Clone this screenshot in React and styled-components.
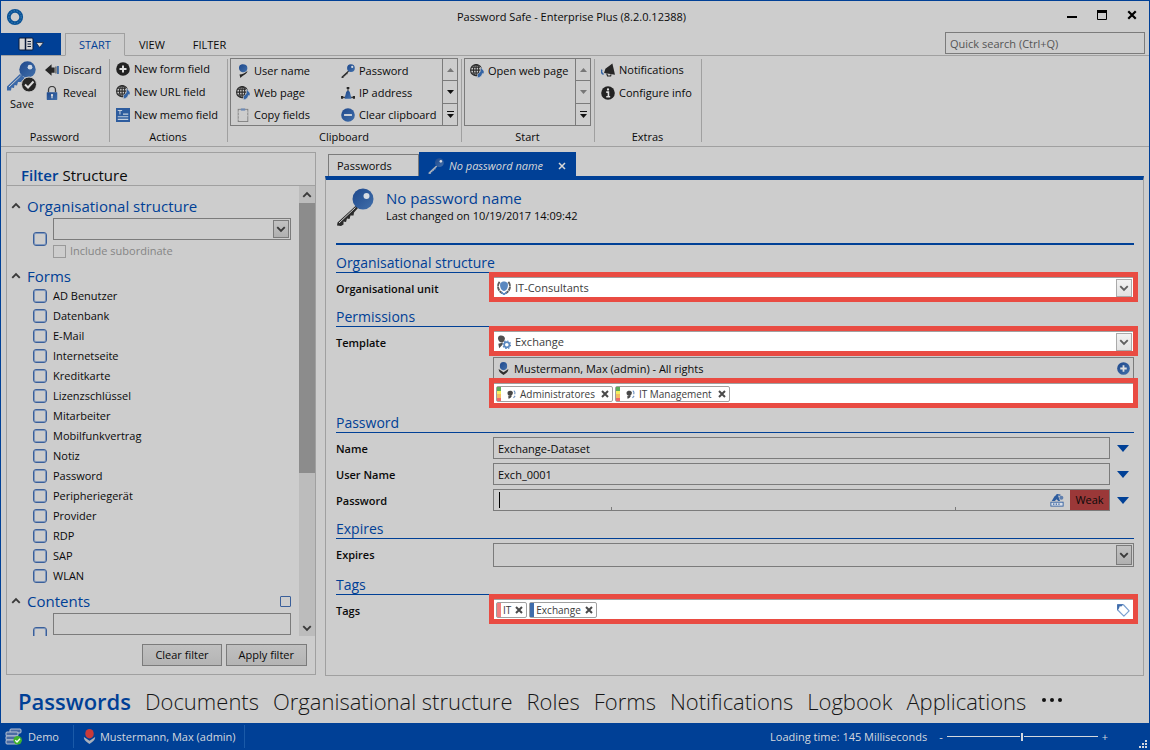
import React from 'react'
import styled, { createGlobalStyle, css } from 'styled-components'

const blue = '#004096'
const grey = '#cdcdcd'
const line = '#a0a0a0'
const edge = '#7b7b7b'
const red = '#e94b42'

const GlobalStyle = createGlobalStyle`
  * {
    box-sizing: border-box;
  }
  body {
    margin: 0;
    background: ${grey};
    font-family: 'Open Sans', 'Noto Sans', sans-serif;
    font-size: 11px;
    line-height: 16px;
    color: #0a0a0a;
  }
  button, input, select {
    font: inherit;
    color: inherit;
    margin: 0;
    padding: 0;
    border: 0;
    border-radius: 0;
    background: none;
    outline: none;
  }
  svg {
    display: block;
    flex: none;
  }
`

/**
 * ICONS
 */

const Svg = ({ size = 16, box = 16, children }) => (
  <svg width={size} height={size} viewBox={`0 0 ${box} ${box}`} aria-hidden="true">
    {children}
  </svg>
)

const HiddenSvg = styled.svg`
  position: absolute;
`

const Gradients = () => (
  <HiddenSvg width="0" height="0" aria-hidden="true">
    <defs>
      <linearGradient id="blueFill" x1="0" y1="0" x2="1" y2="1">
        <stop offset="0" stopColor="#1d478b" />
        <stop offset="1" stopColor="#4270ab" />
      </linearGradient>
    </defs>
  </HiddenSvg>
)

const KeyIcon = ({ size, shaft = '#2b2b2b' }) => (
  <Svg size={size} box={38}>
    <path d="M20 17.500 1.500 34.500 1 37.500 5 38 7.500 36.500 7.500 33.500 10 34 11 30.500 13.500 31 14.500 27.500 17.500 27.500 18 24.500 22 20z" fill={shaft} />
    {size > 20 && <path d="M19.500 19.500 3 35" stroke={grey} strokeWidth="1" />}
    <circle cx="27" cy="11" r="10.500" fill="url(#blueFill)" />
    <circle cx="30.500" cy="8" r="3" fill="#d8dde4" />
  </Svg>
)

const SaveIcon = () => (
  <svg width="32" height="32" viewBox="0 0 32 32" aria-hidden="true">
    <path d="M14 13 1 25.500 1 29.500 5 29.500 5.500 26.500 8 27 8.500 24 11 24.500 12 21 15 21 19 17z" fill="#3a68a8" />
    <path d="M14.500 15 3 26" stroke={grey} strokeWidth="1" />
    <circle cx="21.500" cy="8.500" r="8.200" fill="url(#blueFill)" />
    <circle cx="24" cy="6.200" r="2.400" fill="#cdd7e4" />
    <circle cx="23" cy="23.500" r="7.500" fill="#262626" stroke={grey} />
    <path d="M19 23.500 22 26.500 27.500 20.500" fill="none" stroke="#dcdcdc" strokeWidth="2" />
  </svg>
)

const DiscardIcon = () => (
  <Svg size={14}>
    <path d="M0 8 7.500 1.500V5H11V11H7.500V14.500z" fill="#262626" />
    <path d="M12.500 4V12" stroke="#262626" strokeWidth="1" />
    <path d="M14.800 3.500V12.500" stroke="#3464a4" strokeWidth="2" />
  </Svg>
)

const LockIcon = () => (
  <Svg size={14}>
    <path d="M4 7V4.500A4 4 0 0 1 12 4.500V7" fill="none" stroke="#404040" strokeWidth="1.500" />
    <rect x="2" y="7" width="12" height="9" rx="0.500" fill="url(#blueFill)" />
    <circle cx="8" cy="10.300" r="1.300" fill="#e0e0e0" />
    <path d="M8 10V14" stroke="#e0e0e0" strokeWidth="1.400" />
  </Svg>
)

const PlusIcon = ({ size = 14, fill = '#222' }) => (
  <Svg size={size}>
    <circle cx="8" cy="8" r="7.800" fill={fill} />
    <path d="M8 4V12M4 8H12" stroke="#e0e0e0" strokeWidth="2.200" />
  </Svg>
)

const MinusIcon = () => (
  <Svg size={14}>
    <circle cx="8" cy="8" r="7.800" fill="url(#blueFill)" />
    <path d="M3.500 8H12.500" stroke="#e0e0e0" strokeWidth="2" />
  </Svg>
)

const GlobeIcon = () => (
  <Svg size={14}>
    <g fill="none" stroke="#2b2b2b" strokeWidth="1.300">
      <circle cx="7" cy="7" r="6.300" />
      <ellipse cx="7" cy="7" rx="3" ry="6.300" />
      <path d="M7 0.500V13.500M0.700 7H13M1.800 3.700H12.200M1.800 10.300H12.200" />
    </g>
    <path d="M16 8 12 3.500V6.500C12 9 10.500 10.500 8.500 11.500V16C12.500 15 14 13 14 11H16z" fill="#3464a4" stroke={grey} strokeWidth="0.700" />
  </Svg>
)

const MemoIcon = () => (
  <Svg size={14}>
    <rect width="16" height="16" fill="#2d5c9e" />
    <path d="M2 2.800H7M4.500 3V7.500M8 7H14M2 10H14M2 13H14" stroke="#c4cfde" strokeWidth="1.200" />
  </Svg>
)

const PersonIcon = ({ size = 14 }) => (
  <Svg size={size}>
    <path d="M4 2C5.500 -0.500 13 -0.500 13 4.500 13 8 10.500 9.500 7.500 9.500 4 9 2.500 5 4 2z" fill="url(#blueFill)" />
    <path d="M4 12C7 12 11 10 13 8 13 11 9 12 5 16z" fill="#262626" />
  </Svg>
)

const NetworkIcon = () => (
  <Svg size={14}>
    <path d="M8 3V8M2 13H14" stroke="#404040" strokeWidth="1.300" />
    <path d="M8 5 10 6.500 12 14.500H4L6 6.500z" fill="url(#blueFill)" />
    <path d="M6.500 1H9.500V3.500H6.500zM0 11.500H2.500V14.500H0zM13.500 11.500H16V14.500H13.500z" fill="#262626" />
  </Svg>
)

const ClipboardIcon = () => (
  <Svg size={14}>
    <rect x="2.500" y="1.500" width="11" height="14" fill="none" stroke="#7d7d7d" />
    <path d="M5.500 0.500H10.500V3H5.500z" fill="#6f8bb5" />
    <path d="M2.500 4V5.500M2.500 8V9.500M2.500 12V13.500M13.500 4V5.500M13.500 8V9.500" stroke={grey} />
  </Svg>
)

const HornIcon = () => (
  <Svg size={14}>
    <path d="M13 0.500 5 6.500 3.500 11.500 16 13.500z" fill="#262626" />
    <path d="M6.500 12 7.500 14.800 11 14.800 11.500 13" fill="none" stroke="#262626" strokeWidth="1.300" />
    <path d="M1 7.500C0 9.500 0.500 12 3 13" fill="none" stroke="#3464a4" strokeWidth="1.800" />
  </Svg>
)

const InfoIcon = () => (
  <Svg size={14}>
    <circle cx="8" cy="8" r="7.800" fill="#222" />
    <path d="M6 7H8.500V12M6 12.300H10.500" fill="none" stroke="#e0e0e0" strokeWidth="1.800" />
    <circle cx="8" cy="4" r="1.300" fill="#e0e0e0" />
  </Svg>
)

const RingIcon = () => (
  <Svg size={18} box={18}>
    <circle cx="9" cy="9" r="6.200" fill="none" stroke="#0a5296" strokeWidth="3.800" />
    <circle cx="9" cy="9" r="6.200" fill="none" stroke="#4186ba" strokeWidth="1" strokeDasharray="1.500 1.500" />
  </Svg>
)

const MenuIcon = () => (
  <svg width="26" height="14" viewBox="0 0 26 14" aria-hidden="true">
    <rect x="1" y="1" width="14" height="12" rx="1" fill="#d6d6d6" stroke="#0a1a38" />
    <path d="M7.500 1V13" stroke="#0a1a38" strokeWidth="1.500" />
    <path d="M9.500 4.500H13M9.500 7H13M9.500 9.500H13" stroke="#0a1a38" />
    <path d="M18 5.500H25.500L21.700 10.500z" fill="#d6d6d6" stroke="#0a1a38" strokeWidth="0.700" />
  </svg>
)

const ShieldIcon = () => (
  <Svg size={14}>
    <path d="M4 2.500C5.500 0 10.500 0 12 2.500 13.500 5.500 11.500 11 8 11.500 4.500 11 2.500 5.500 4 2.500z" fill="#5a88c0" />
    <path d="M3 1C-0.500 5 1 11 6 14M13 1C16.500 5 15 11 10 14" fill="none" stroke="#5c5c5c" strokeWidth="2.200" strokeDasharray="5 0.700" />
    <path d="M5 12.500 8 15.500 11 12.500" fill="none" stroke="#5a88c0" strokeWidth="1.800" />
  </Svg>
)

const TemplateIcon = () => (
  <Svg size={14}>
    <path d="M1.500 2C3 -0.500 9 0 9 4 9 7 7 8.500 5 8.500 2 8.500 0.500 4.500 1.500 2z" fill="#505050" />
    <path d="M1.500 10 7 8.500 6 11.500 2.500 15z" fill="#505050" />
    <circle cx="11.200" cy="11.200" r="3" fill="none" stroke="#5a88c0" strokeWidth="1.900" />
    <circle cx="11.200" cy="11.200" r="4.400" fill="none" stroke="#5a88c0" strokeWidth="1.300" strokeDasharray="1.800 1.600" />
  </Svg>
)

const UserIcon = ({ head = 'url(#blueFill)', body = '#2f2f2f', size = 14 }) => (
  <Svg size={size}>
    <ellipse cx="8" cy="5" rx="4.500" ry="5" fill={head} />
    <path d="M2 8.500 8 12.500 14 8.500C14 12 11 14 8 16 5 14 2 12 2 8.500z" fill={body} />
  </Svg>
)

const GroupIcon = () => (
  <Svg size={9}>
    <path d="M1 4.500C1.500 0 10 0 10.500 4.500 10.500 8.500 8 10.500 5.500 10.500 2 10 0.500 7.500 1 4.500z" fill="#484848" />
    <path d="M2 11 9 10 7 13 3 16z" fill="#484848" />
    <path d="M12 1.500C14.500 2.500 14.500 5.500 13.500 7.500M11.500 14 14.500 10.500" fill="none" stroke="#6f93c2" strokeWidth="2" />
  </Svg>
)

const DiceIcon = () => (
  <Svg size={14}>
    <rect x="1" y="10.500" width="14" height="4.500" fill="#d9dfe8" stroke="#2d5c9e" />
    <path d="M3.500 12.700H12.500" stroke="#2d5c9e" strokeWidth="1.500" strokeDasharray="1.500 1.500" />
    <path d="M2 9 5 4 8.500 1 11.500 9H9.500L7.500 7 5.500 9z" fill="#2d5c9e" />
    <path d="M7.500 2 12 2.500" stroke="#2d5c9e" strokeWidth="1.500" />
    <circle cx="13" cy="5.500" r="2.300" fill="#5f7fae" />
  </Svg>
)

const TagIcon = () => (
  <Svg size={14}>
    <path d="M2 2H8.500L15 9 9 15 2 8z" fill="none" stroke="#7ba0d0" strokeWidth="1.400" strokeLinejoin="round" />
    <path d="M1.300 1.300H8.500L6 4 4 5.500 1.300 8.500z" fill="#3f6cab" />
    <circle cx="4.800" cy="4.800" r="1" fill="#fff" />
  </Svg>
)

const CrossIcon = ({ size = 8, color = '#4a4a4a', weight = 4 }) => (
  <Svg size={size}>
    <path d="M2 2 14 14M14 2 2 14" stroke={color} strokeWidth={weight} />
  </Svg>
)

const Chevron = ({ up, color = '#3a3a3a' }) => (
  <Svg size={10}>
    <path d={up ? 'M2 11 8 5 14 11' : 'M2 5 8 11 14 5'} fill="none" stroke={color} strokeWidth="3" />
  </Svg>
)

const ServerIcon = () => (
  <Svg size={17} box={17}>
    <g fill="#4a6ba3" stroke="#c6ccd6" strokeWidth="0.900">
      <rect x="5" y="1" width="11" height="4" rx="1" />
      <rect x="1" y="4" width="12" height="4" rx="1" />
      <rect x="1" y="8" width="12" height="4" rx="1" />
      <rect x="1" y="12" width="12" height="4" rx="1" />
    </g>
    <circle cx="12.700" cy="12.300" r="4.200" fill="#3fb42c" />
    <path d="M10.300 12.300 12 14 15 10.700" fill="none" stroke="#fff" strokeWidth="1.300" />
  </Svg>
)

/**
 * WINDOW
 */

const Window = styled.div`
  display: flex;
  flex-direction: column;
  height: 100vh;
  border: 1px solid ${blue};
  border-bottom: 0;
  background: ${grey};
`

const TitleBar = styled.header`
  display: grid;
  grid-template-columns: 1fr auto 1fr;
  align-items: center;
  height: 32px;
  padding: 0 12px 0 5px;
`

const WindowButtons = styled.div`
  display: flex;
  justify-content: flex-end;
  gap: 20px;
  padding-bottom: 4px;
`

const IconButton = styled.button`
  display: flex;
  flex: none;
  align-items: center;
  justify-content: center;
`

const TabBar = styled.nav`
  display: flex;
  height: 23px;
  border-bottom: 1px solid ${line};
  padding-right: 4px;
`

const MenuButton = styled(IconButton)`
  width: 60px;
  height: 22px;
  margin-right: 4px;
  background: ${blue};
`

const RibbonTab = styled.button`
  height: 23px;
  padding: 1px 13px 0;
  border: 1px solid transparent;
  ${p => p.$active && css`
    color: ${blue};
    background: ${grey};
    border-color: ${line};
    border-bottom-color: ${grey};
  `}
`

const Search = styled.input`
  width: 200px;
  height: 22px;
  margin: -1px 0 0 auto;
  padding: 0 4px;
  border: 1px solid ${edge};
  &::placeholder {
    color: #555;
    opacity: 1;
  }
`

/**
 * RIBBON
 */

const Ribbon = styled.div`
  display: flex;
  height: 91px;
  padding: 3px 0 4px;
  border-bottom: 1px solid ${line};
`

const Group = styled.section`
  display: flex;
  flex-direction: column;
  align-items: center;
  flex: none;
  width: ${p => p.$width}px;
  padding: 0 3px 0 2px;
  border-right: 1px solid ${line};
`

const GroupBody = styled.div`
  display: flex;
  flex: none;
  width: 100%;
  height: 68px;
  gap: 5px;
  margin-top: -1px;
`

const GroupName = styled.span`
  flex: none;
  padding-top: 3px;
`

const Stack = styled.div`
  display: flex;
  flex-direction: column;
  padding-left: ${p => p.$indent || 0}px;
`

const Tool = styled.button`
  display: flex;
  align-items: center;
  gap: 4px;
  height: ${p => (p.$small ? 22 : 23)}px;
  white-space: nowrap;
`

const BigTool = styled.button`
  display: flex;
  flex-direction: column;
  align-items: center;
  gap: 3px;
  width: 36px;
  margin-left: 1px;
  padding-top: 3px;
`

const Gallery = styled.div`
  display: flex;
  flex: 1;
  height: 68px;
  border: 1px solid ${edge};
`

const GalleryItems = styled.div`
  display: grid;
  grid-template-columns: ${p => (p.$two ? '105px 1fr' : '1fr')};
  grid-auto-rows: 22px;
  flex: 1;
  padding-left: 5px;
  padding-top: 1px;
`

const GallerySteps = styled.div`
  display: flex;
  flex-direction: column;
  width: 15px;
  border-left: 1px solid ${edge};
`

const StepButton = styled(IconButton)`
  flex: 1;
  & + & {
    border-top: 1px solid ${edge};
  }
`

const Steps = ({ down = '#111' }) => (
  <GallerySteps>
    <StepButton aria-label="Previous">
      <svg width="7" height="4"><path d="M0 4H7L3.500 0z" fill="#777" /></svg>
    </StepButton>
    <StepButton aria-label="Next">
      <svg width="7" height="4"><path d="M0 0H7L3.500 4z" fill={down} /></svg>
    </StepButton>
    <StepButton aria-label="More">
      <svg width="7" height="7"><path d="M0 0H7V1H0zM0 3H7L3.500 7z" fill="#111" /></svg>
    </StepButton>
  </GallerySteps>
)

/**
 * FILTER PANEL
 */

const Main = styled.main`
  display: flex;
  flex: 1;
  min-height: 0;
  gap: 9px;
  padding: 5px 5px 0;
`

const FilterPanel = styled.aside`
  display: flex;
  flex-direction: column;
  flex: none;
  width: 310px;
  margin-bottom: 1px;
  border: 1px solid ${line};
`

const FilterTabs = styled.div`
  display: flex;
  align-items: flex-end;
  gap: 4px;
  height: 33px;
  padding: 0 14px;
  border-bottom: 1px solid ${line};
`

const FilterTab = styled.button`
  font-size: 15px;
  line-height: 20px;
  font-weight: ${p => (p.$active ? 600 : 400)};
  color: ${p => (p.$active ? blue : 'inherit')};
`

const Scroller = styled.div`
  display: flex;
  flex: 1 1 0;
  min-height: 0;
  overflow: hidden;
`

const FilterList = styled.div`
  flex: 1;
  padding: 10px 8px 0 4px;
`

const Scrollbar = styled.div`
  display: flex;
  flex-direction: column;
  width: 16px;
  background: #bcbcbc;
`

const ScrollButton = styled(IconButton)`
  height: 17px;
`

const Track = styled.div`
  flex: 1;
`

const Thumb = styled.div`
  height: 65%;
  background: #8c8c8c;
`

const GroupTitle = styled.h2`
  display: flex;
  align-items: center;
  gap: 6px;
  height: 20px;
  margin: 0;
  font-size: 15px;
  line-height: 20px;
  font-weight: 400;
  color: ${blue};
  & > input {
    margin-left: auto;
  }
`

const Check = styled.input.attrs({ type: 'checkbox' })`
  appearance: none;
  flex: none;
  width: ${p => p.$size || 14}px;
  height: ${p => p.$size || 14}px;
  border: 1px solid #3a5f9a;
  border-radius: ${p => (p.$size ? 1 : 3)}px;
  box-shadow: ${p => (p.$size ? 'none' : 'inset 0 0 0 1px #8098bd')};
  &:disabled {
    border-color: #999;
    border-radius: 0;
  }
`

const FilterField = styled.div`
  display: flex;
  gap: 6px;
  padding-left: 22px;
  margin-top: 2px;
  & > ${Check} {
    margin-top: 14px;
  }
`

const FilterFieldBody = styled.div`
  flex: 1;
`

const CheckRow = styled.label`
  display: flex;
  align-items: center;
  gap: ${p => (p.$muted ? 4 : 6)}px;
  height: ${p => (p.$muted ? 22 : 20)}px;
  padding-left: ${p => (p.$muted ? 0 : 22)}px;
  color: ${p => (p.$muted ? '#858585' : 'inherit')};
`

const Forms = styled.div`
  margin: 4px 0 5px;
`

const FilterFooter = styled.div`
  display: flex;
  justify-content: flex-end;
  gap: 4px;
  padding: 8px;
`

const PushButton = styled.button`
  height: 22px;
  padding: 0 12px;
  border: 1px solid ${edge};
  background: linear-gradient(#c0c0c0, #b4b4b4);
`

/**
 * FIELDS
 */

const FieldBox = styled.div`
  position: relative;
  display: flex;
  align-items: center;
  flex: 1;
  height: ${p => p.$height || 22}px;
  border: 1px solid ${edge};
  ${p => p.$marked && css`
    background: #fff;
    border-color: ${line};
    color: #3c3c3c;
    &::after {
      content: '';
      position: absolute;
      inset: -6px -5px -4px;
      border: 5px solid ${red};
      pointer-events: none;
    }
  `}
`

const TextInput = styled.input`
  flex: 1;
  min-width: 0;
  width: 100%;
  height: 20px;
  padding: 0 4px;
`

const Select = styled.select`
  appearance: none;
  flex: 1;
  min-width: 0;
  height: 20px;
  padding: 0 20px 0 4px;
`

const Arrow = styled.span`
  position: absolute;
  top: 1px;
  right: 1px;
  bottom: 1px;
  display: flex;
  align-items: center;
  justify-content: center;
  width: 16px;
  border: 1px solid ${p => (p.$light ? '#aaa' : edge)};
  background: ${p => (p.$light ? 'linear-gradient(#f2f2f2, #e2e2e2)' : 'linear-gradient(#c2c2c2, #b0b0b0)')};
  pointer-events: none;
`

const LeadIcon = styled.span`
  flex: none;
  margin-left: 3px;
`

const DropDown = ({ id, label, icon, value, marked, height }) => (
  <FieldBox $marked={marked} $height={height}>
    {icon && <LeadIcon>{icon}</LeadIcon>}
    <Select id={id} aria-label={label} defaultValue={value}>
      <option value={value}>{value}</option>
    </Select>
    <Arrow $light={marked}>
      <Chevron color={marked ? '#606060' : '#3a3a3a'} />
    </Arrow>
  </FieldBox>
)

/**
 * DOCUMENT
 */

const Content = styled.section`
  display: flex;
  flex-direction: column;
  flex: 1;
  min-width: 0;
`

const DocTabs = styled.div`
  display: flex;
  align-items: flex-end;
  height: 24px;
  padding-left: 3px;
`

const DocTab = styled.button`
  display: flex;
  align-items: center;
  gap: 5px;
  height: ${p => (p.$active ? 24 : 22)}px;
  padding: 0 8px;
  border: 1px solid ${edge};
  border-bottom: 0;
  min-width: 91px;
  ${p => p.$active && css`
    padding: 2px 9px 0 8px;
    color: #d8d8d8;
    font-style: italic;
    background: ${blue};
    border-color: ${blue};
    & > :last-child {
      margin-left: 10px;
    }
  `}
`

const Doc = styled.div`
  flex: 1;
  padding: 0 9px 0 10px;
  border: 1px solid ${line};
  border-top: 4px solid ${blue};
`

const DocHeader = styled.div`
  display: flex;
  gap: 12px;
  height: 65px;
  padding-top: 8px;
  border-bottom: 2px solid ${blue};
`

const DocTitle = styled.h1`
  margin: 0;
  font-size: 15px;
  line-height: 20px;
  font-weight: 400;
  color: ${blue};
`

const SectionTitle = styled.h2`
  height: 28px;
  margin: 0 0 4px;
  padding-top: 8px;
  border-bottom: 1px solid ${blue};
  font-size: 14px;
  line-height: 19px;
  font-weight: 400;
  color: ${blue};
`

const Row = styled.div`
  display: flex;
  & + & {
    margin-top: 4px;
  }
`

const Label = styled.label`
  flex: none;
  width: 157px;
  padding-top: 4px;
  font-weight: 600;
`

const RowMenu = styled(IconButton)`
  width: 24px;
  padding-left: 2px;
`

const Mark = styled.i`
  position: absolute;
  bottom: 0;
  left: ${p => p.$at}%;
  width: 1px;
  height: 3px;
  background: ${edge};
`

const PasswordInput = styled.div`
  position: relative;
  display: flex;
  align-items: center;
  flex: 1;
  height: 20px;
`

const Caret = styled.i`
  width: 1px;
  height: 16px;
  margin-left: 5px;
  background: #000;
`

const Weak = styled.output`
  width: 39px;
  height: 20px;
  margin-left: 6px;
  line-height: 20px;
  text-align: center;
  background: #9b3838;
`

const Chip = styled.span`
  display: flex;
  align-items: center;
  gap: 4px;
  height: 16px;
  margin-left: 2px;
  padding-right: 3px;
  border: 1px solid ${line};
  border-radius: 2px;
  font-size: 10px;
  & > button {
    margin-left: ${p => (p.$wide ? 2 : 0)}px;
  }
`

const Stripe = styled.i`
  width: 4px;
  height: 14px;
  margin-right: -2px;
  background: ${p => p.$fill};
  & + svg {
    margin-left: 4px;
  }
`

const rights = 'linear-gradient(#5cab5c 0 4px, #f4f060 4px 7px, #f5bd62 7px 11px, #ef6a6a 11px)'

const Tag = ({ fill, icon, children }) => (
  <Chip $wide={!!icon}>
    <Stripe $fill={fill} />
    {icon}
    {children}
    <IconButton aria-label={`Remove ${children}`}>
      <CrossIcon />
    </IconButton>
  </Chip>
)

const EndButton = styled(IconButton)`
  margin: 0 3px 0 auto;
`

const MenuTriangle = ({ label }) => (
  <RowMenu aria-label={`${label} menu`}>
    <svg width="12" height="7"><path d="M0 0H12L6 7z" fill={blue} /></svg>
  </RowMenu>
)

/**
 * BOTTOM
 */

const Modules = styled.nav`
  display: flex;
  align-items: center;
  gap: 14px;
  height: 47px;
  padding: 2px 17px 0;
  font-size: 22px;
  line-height: 32px;
`

const Module = styled.a`
  color: ${p => (p.$active ? blue : '#161616')};
  font-weight: ${p => (p.$active ? 600 : 300)};
  text-decoration: none;
  white-space: nowrap;
`

const StatusBar = styled.footer`
  display: flex;
  align-items: center;
  height: 27px;
  padding-left: 4px;
  background: ${blue};
  color: #d4d8de;
`

const StatusItem = styled.div`
  display: flex;
  align-items: center;
  gap: ${p => p.$gap}px;
  height: 23px;
  padding-right: ${p => p.$pad}px;
  margin-right: 8px;
  border-right: 1px solid #1a5aa8;
`

const LoadTime = styled.span`
  margin-left: auto;
`

const Zoom = styled.div`
  display: flex;
  align-items: center;
  gap: 4px;
  margin: 0 31px 0 12px;
`

const Slider = styled.input.attrs({ type: 'range' })`
  appearance: none;
  width: 151px;
  height: 9px;
  background: linear-gradient(#d4d8de, #d4d8de) center / 100% 1px no-repeat;
  &::-webkit-slider-thumb {
    appearance: none;
    width: 4px;
    height: 8px;
    background: #d4d8de;
    border: 1px solid ${blue};
    border-width: 0 1px;
  }
`

const Grip = styled.span`
  align-self: flex-end;
  padding-bottom: 2px;
  margin-right: 2px;
`

const formNames = ['AD Benutzer', 'Datenbank', 'E-Mail', 'Internetseite', 'Kreditkarte', 'Lizenzschlüssel', 'Mitarbeiter',
  'Mobilfunkvertrag', 'Notiz', 'Password', 'Peripheriegerät', 'Provider', 'RDP', 'SAP', 'WLAN']

const modules = ['Passwords', 'Documents', 'Organisational structure', 'Roles', 'Forms', 'Notifications', 'Logbook', 'Applications']

const RibbonArea = () => (
  <Ribbon>
    <Group $width={109}>
      <GroupBody>
        <BigTool><SaveIcon />Save</BigTool>
        <Stack>
          <Tool><DiscardIcon />Discard</Tool>
          <Tool><LockIcon />Reveal</Tool>
        </Stack>
      </GroupBody>
      <GroupName>Password</GroupName>
    </Group>
    <Group $width={118}>
      <GroupBody>
        <Stack $indent={4}>
          <Tool><PlusIcon />New form field</Tool>
          <Tool><GlobeIcon />New URL field</Tool>
          <Tool><MemoIcon />New memo field</Tool>
        </Stack>
      </GroupBody>
      <GroupName>Actions</GroupName>
    </Group>
    <Group $width={234}>
      <GroupBody>
        <Gallery>
          <GalleryItems $two>
            <Tool $small><PersonIcon />User name</Tool>
            <Tool $small><KeyIcon size={14} />Password</Tool>
            <Tool $small><GlobeIcon />Web page</Tool>
            <Tool $small><NetworkIcon />IP address</Tool>
            <Tool $small><ClipboardIcon />Copy fields</Tool>
            <Tool $small><MinusIcon />Clear clipboard</Tool>
          </GalleryItems>
          <Steps />
        </Gallery>
      </GroupBody>
      <GroupName>Clipboard</GroupName>
    </Group>
    <Group $width={133}>
      <GroupBody>
        <Gallery>
          <GalleryItems>
            <Tool $small><GlobeIcon />Open web page</Tool>
          </GalleryItems>
          <Steps down="#777" />
        </Gallery>
      </GroupBody>
      <GroupName>Start</GroupName>
    </Group>
    <Group $width={107}>
      <GroupBody>
        <Stack $indent={4}>
          <Tool><HornIcon />Notifications</Tool>
          <Tool><InfoIcon />Configure info</Tool>
        </Stack>
      </GroupBody>
      <GroupName>Extras</GroupName>
    </Group>
  </Ribbon>
)

const Filter = () => (
  <FilterPanel>
    <FilterTabs>
      <FilterTab $active>Filter</FilterTab>
      <FilterTab>Structure</FilterTab>
    </FilterTabs>
    <Scroller>
      <FilterList>
        <GroupTitle><Chevron up />Organisational structure</GroupTitle>
        <FilterField>
          <Check aria-label="Filter by organisational structure" />
          <FilterFieldBody>
            <DropDown label="Organisational structure" value="" />
            <CheckRow $muted>
              <Check disabled $size={13} />
              Include subordinate
            </CheckRow>
          </FilterFieldBody>
        </FilterField>
        <Forms>
          <GroupTitle><Chevron up />Forms</GroupTitle>
          {formNames.map(name => (
            <CheckRow key={name}>
              <Check />
              {name}
            </CheckRow>
          ))}
        </Forms>
        <GroupTitle>
          <Chevron up />Contents
          <Check $size={11} aria-label="All contents" />
        </GroupTitle>
        <FilterField>
          <Check aria-label="Filter by contents" />
          <FilterFieldBody>
            <FieldBox>
              <TextInput aria-label="Contents" />
            </FieldBox>
          </FilterFieldBody>
        </FilterField>
      </FilterList>
      <Scrollbar>
        <ScrollButton aria-label="Scroll up"><Chevron up /></ScrollButton>
        <Track><Thumb /></Track>
        <ScrollButton aria-label="Scroll down"><Chevron /></ScrollButton>
      </Scrollbar>
    </Scroller>
    <FilterFooter>
      <PushButton>Clear filter</PushButton>
      <PushButton>Apply filter</PushButton>
    </FilterFooter>
  </FilterPanel>
)

const PasswordForm = () => (
  <Content>
    <DocTabs>
      <DocTab>Passwords</DocTab>
      <DocTab $active>
        <KeyIcon size={16} shaft="#a8b0bc" />
        No password name
        <CrossIcon color="#d8d8d8" weight={3} />
      </DocTab>
    </DocTabs>
    <Doc>
      <DocHeader>
        <KeyIcon size={38} />
        <div>
          <DocTitle>No password name</DocTitle>
          Last changed on 10/19/2017 14:09:42
        </div>
      </DocHeader>
      <SectionTitle>Organisational structure</SectionTitle>
      <Row>
        <Label htmlFor="unit">Organisational unit</Label>
        <DropDown id="unit" icon={<ShieldIcon />} value="IT-Consultants" marked />
      </Row>
      <SectionTitle>Permissions</SectionTitle>
      <Row>
        <Label htmlFor="template">Template</Label>
        <DropDown id="template" icon={<TemplateIcon />} value="Exchange" marked />
      </Row>
      <Row>
        <Label as="span" />
        <FieldBox>
          <LeadIcon><UserIcon size={13} /></LeadIcon>
          <TextInput aria-label="Rights" defaultValue="Mustermann, Max (admin) - All rights" />
          <EndButton aria-label="Add rights"><PlusIcon size={13} fill="url(#blueFill)" /></EndButton>
        </FieldBox>
      </Row>
      <Row>
        <Label as="span" />
        <FieldBox $marked>
          <Tag fill={rights} icon={<GroupIcon />}>Administratores</Tag>
          <Tag fill={rights} icon={<GroupIcon />}>IT Management</Tag>
        </FieldBox>
      </Row>
      <SectionTitle>Password</SectionTitle>
      <Row>
        <Label htmlFor="name">Name</Label>
        <FieldBox>
          <TextInput id="name" defaultValue="Exchange-Dataset" />
        </FieldBox>
        <MenuTriangle label="Name" />
      </Row>
      <Row>
        <Label htmlFor="user">User Name</Label>
        <FieldBox>
          <TextInput id="user" defaultValue="Exch_0001" />
        </FieldBox>
        <MenuTriangle label="User name" />
      </Row>
      <Row>
        <Label htmlFor="password">Password</Label>
        <FieldBox>
          <PasswordInput>
            <Caret />
            <TextInput id="password" type="password" />
            <IconButton aria-label="Generate password"><DiceIcon /></IconButton>
            <Weak>Weak</Weak>
            <Mark $at={19} />
            <Mark $at={75} />
          </PasswordInput>
        </FieldBox>
        <MenuTriangle label="Password" />
      </Row>
      <SectionTitle>Expires</SectionTitle>
      <Row>
        <Label htmlFor="expires">Expires</Label>
        <DropDown id="expires" value="" height={24} />
      </Row>
      <SectionTitle>Tags</SectionTitle>
      <Row>
        <Label as="span">Tags</Label>
        <FieldBox $marked>
          <Tag fill="#f08080">IT</Tag>
          <Tag fill="#3f6cab">Exchange</Tag>
          <EndButton aria-label="Choose tags"><TagIcon /></EndButton>
        </FieldBox>
      </Row>
    </Doc>
  </Content>
)

const App = () => (
  <Window>
    <GlobalStyle />
    <Gradients />
    <TitleBar>
      <RingIcon />
      <span>Password Safe - Enterprise Plus (8.2.0.12388)</span>
      <WindowButtons>
        <IconButton aria-label="Minimize">
          <svg width="10" height="10"><path d="M0 6H10V8H0z" /></svg>
        </IconButton>
        <IconButton aria-label="Maximize">
          <svg width="10" height="10"><path d="M0.500 0.500H9.500V9.500H0.500z" fill="none" stroke="#000" /><path d="M0 0H10V3H0z" /></svg>
        </IconButton>
        <IconButton aria-label="Close"><CrossIcon size={10} color="#000" weight={3.500} /></IconButton>
      </WindowButtons>
    </TitleBar>
    <TabBar>
      <MenuButton aria-label="Application menu"><MenuIcon /></MenuButton>
      <RibbonTab $active>START</RibbonTab>
      <RibbonTab>VIEW</RibbonTab>
      <RibbonTab>FILTER</RibbonTab>
      <Search placeholder="Quick search (Ctrl+Q)" aria-label="Quick search" />
    </TabBar>
    <RibbonArea />
    <Main>
      <Filter />
      <PasswordForm />
    </Main>
    <Modules>
      {modules.map((name, i) => (
        <Module key={name} href="#" $active={i === 0}>{name}</Module>
      ))}
      <IconButton aria-label="More modules">
        <svg width="24" height="10"><g fill="#111"><circle cx="4" cy="4" r="2" /><circle cx="12" cy="4" r="2" /><circle cx="20" cy="4" r="2" /></g></svg>
      </IconButton>
    </Modules>
    <StatusBar>
      <StatusItem $gap={6} $pad={14}><ServerIcon />Demo</StatusItem>
      <StatusItem $gap={3} $pad={8}><UserIcon size={15} head="#c93a3a" body="#a8b0bc" />Mustermann, Max (admin)</StatusItem>
      <LoadTime>Loading time: 145 Milliseconds</LoadTime>
      <Zoom>
        <span>-</span>
        <Slider aria-label="Zoom" defaultValue={50} />
        <span>+</span>
      </Zoom>
      <Grip>
        <svg width="8" height="8"><path d="M6 0H8V2H6zM3 3H5V5H3zM6 3H8V5H6zM0 6H2V8H0zM3 6H5V8H3zM6 6H8V8H6z" fill="#d4d8de" /></svg>
      </Grip>
    </StatusBar>
  </Window>
)

export default App
